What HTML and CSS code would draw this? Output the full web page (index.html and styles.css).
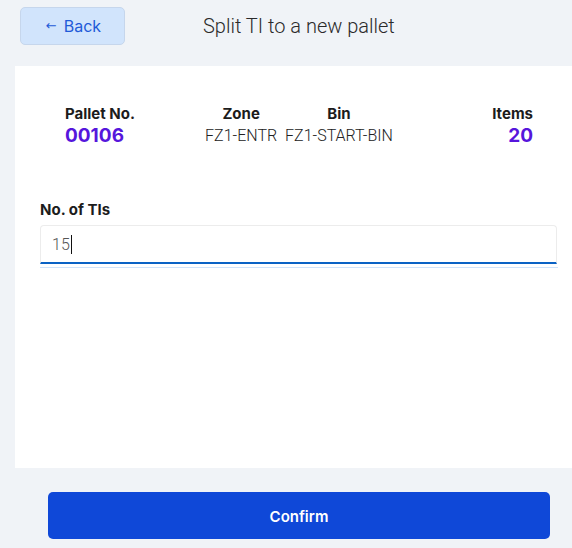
FILE: index.html
```html
<!DOCTYPE html>
<html>
<head>
<meta charset="utf-8">
<link rel="stylesheet" href="styles.css">
</head>
<body>
<div class="page">
  <header class="topbar">
    <button class="back"><span class="arrow">←</span> Back</button>
    <h1 class="title">Split TI to a new pallet</h1>
  </header>
  <main class="card">
    <div class="info">
      <div class="col">
        <div class="label">Pallet No.</div>
        <div class="num">00106</div>
      </div>
      <div class="mid">
        <div class="col center">
          <div class="label">Zone</div>
          <div class="val">FZ1-ENTR</div>
        </div>
        <div class="col center">
          <div class="label">Bin</div>
          <div class="val">FZ1-START-BIN</div>
        </div>
      </div>
      <div class="col right">
        <div class="label">Items</div>
        <div class="num">20</div>
      </div>
    </div>
    <div class="field">
      <label class="flabel">No. of TIs</label>
      <div class="input"><span class="itext">15</span><span class="caret"></span></div>
      <div class="underline"></div>
    </div>
  </main>
  <footer class="footer">
    <button class="confirm">Confirm</button>
  </footer>
</div>
</body>
</html>
```
FILE: styles.css
```css
* { box-sizing: border-box; }
html, body { margin: 0; padding: 0; }
body {
  background: #f0f3f7;
  font-family: Inter, "Noto Sans", sans-serif;
  width: 572px;
  height: 548px;
  overflow: hidden;
}
.page { display: flex; flex-direction: column; }
.topbar {
  display: flex;
  padding: 7px 0 0 20px;
  height: 66px;
  align-items: flex-start;
}
.back {
  width: 105px;
  height: 38px;
  background: #d1e4fc;
  border: 1px solid #c6d6ec;
  border-radius: 5px;
  color: #1f5ad8;
  font-family: Inter, sans-serif;
  font-size: 16px;
  font-weight: 400;
  display: flex;
  align-items: center;
  justify-content: center;
  gap: 7px;
  padding: 0 0 1px 2px;
}
.arrow { font-size: 13px; font-family: "DejaVu Sans", sans-serif; }
.title {
  margin: 0 0 0 78px;
  font-family: Roboto, sans-serif;
  font-weight: 300;
  font-size: 20px;
  color: #2a2a2a;
  line-height: 38px;
}
.card {
  background: #fff;
  margin-left: 15px;
  height: 402px;
  padding: 39px 39px 0 25px;
}
.info {
  display: grid;
  grid-template-columns: 1fr auto 1fr;
  padding-left: 25px;
}
.mid { display: flex; gap: 8px; }
.col { display: flex; flex-direction: column; }
.center { align-items: center; }
.right { align-items: flex-end; }
.label {
  font-weight: 700;
  font-size: 15px;
  color: #1c1c1c;
  line-height: 18px;
}
.num {
  font-weight: 700;
  font-size: 19px;
  color: #5616dc;
  line-height: 26px;
}
.val {
  font-family: Roboto, sans-serif;
  font-weight: 300;
  font-size: 16px;
  color: #222;
  line-height: 26px;
}
.field { margin-top: 52px; }
.flabel {
  display: block;
  font-weight: 700;
  font-size: 15px;
  color: #1c1c1c;
  line-height: 18px;
  margin-bottom: 6px;
}
.input {
  width: 517px;
  height: 39px;
  border: 1px solid #ececec;
  border-bottom: 2px solid #0a62c4;
  border-radius: 4px 4px 0 0;
  display: flex;
  align-items: center;
  padding-left: 11px;
  font-family: Roboto, sans-serif;
  font-weight: 300;
  font-size: 16px;
  color: #555;
}
.caret {
  display: inline-block;
  width: 1px;
  height: 19px;
  background: #111;
  margin-left: 1px;
}
.underline {
  width: 518px;
  height: 1px;
  background: #cfe3fa;
  margin-top: 3px;
}
.footer {
  padding: 24px 0 0 48px;
}
.confirm {
  width: 502px;
  height: 47px;
  background: #0f48d8;
  border: none;
  border-radius: 5px;
  color: #fff;
  font-family: Inter, sans-serif;
  font-weight: 600;
  font-size: 15px;
  padding-top: 2px;
}
```
